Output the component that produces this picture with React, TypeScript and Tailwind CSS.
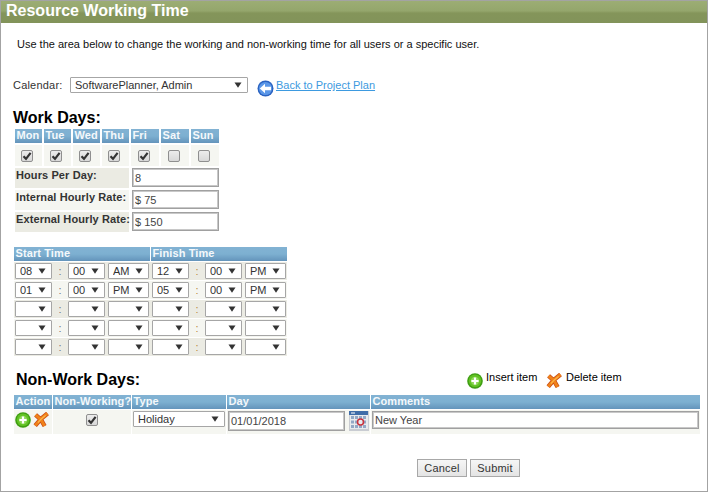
import React from 'react';

const days = [
  { label: 'Mon', width: 'w-[27px]', checked: true },
  { label: 'Tue', width: 'w-[27px]', checked: true },
  { label: 'Wed', width: 'w-[27px]', checked: true },
  { label: 'Thu', width: 'w-[27px]', checked: true },
  { label: 'Fri', width: 'w-[28px]', checked: true },
  { label: 'Sat', width: 'w-[28px]', checked: false },
  { label: 'Sun', width: 'w-[28px]', checked: false },
];

const rates = [
  { label: 'Hours Per Day:', value: '8', tint: 'bg-[#ebebe3]' },
  { label: 'Internal Hourly Rate:', value: '$ 75', tint: 'bg-[#f5f6f1]' },
  { label: 'External Hourly Rate:', value: '$ 150', tint: 'bg-[#ebebe3]' },
];

const timeRows = [
  ['08', '00', 'AM', '12', '00', 'PM'],
  ['01', '00', 'PM', '05', '00', 'PM'],
  ['', '', '', '', '', ''],
  ['', '', '', '', '', ''],
  ['', '', '', '', '', ''],
];

const headerCell =
  'h-[14px] bg-gradient-to-b from-[#82b2d3] via-[#7db0d1] to-[#6494bb] text-[11px] font-bold leading-[13px] tracking-[0.1px] text-[#f4f8fb] pl-[1.5px] whitespace-nowrap overflow-hidden';

const Arrow = ({ className }: { className: string }) => (
  <svg width="8" height="6" viewBox="0 0 8 6" className={`pointer-events-none absolute ${className}`}>
    <path d="M0.5 0.5h7L4 5.8z" fill="#333" />
  </svg>
);

const Select = ({ value, width, height = 'h-[16px]' }: { value: string; width: string; height?: string }) => (
  <div className={`relative shrink-0 ${width} ${height}`}>
    <select
      defaultValue={value}
      className="block h-full w-full appearance-none rounded-[1px] border border-[#a6a6a6] bg-white pl-[4px] text-[11px] leading-[14px] text-[#333]"
    >
      <option value={value}>{value}</option>
    </select>
    <Arrow className="right-[6px] top-[5px]" />
  </div>
);

const Check = ({ checked }: { checked: boolean }) => (
  <span className="flex h-[12px] w-[12px] items-center justify-center rounded-[2px] border border-[#8f8f8f] bg-gradient-to-b from-[#ececec] to-[#d8d8d8]">
    {checked && (
      <svg width="10" height="10" viewBox="0 0 10 10">
        <path d="M1.5 5.2 4 7.8 8.6 1.8" fill="none" stroke="#333" strokeWidth="2.2" />
      </svg>
    )}
  </span>
);

const TextBox = ({ value, className }: { value: string; className: string }) => (
  <input
    readOnly
    value={value}
    className={`border border-[#a0a0a0] bg-white pl-[2px] text-[11px] leading-[14px] text-[#444] shadow-[inset_0_0_0_1px_#c8c8c8] ${className}`}
  />
);

const PlusIcon = () => (
  <svg width="16" height="16" viewBox="0 0 16 16" className="shrink-0">
    <circle cx="8" cy="8" r="7.8" fill="#3f9e12" />
    <circle cx="8" cy="7.8" r="6.3" fill="#62c224" />
    <circle cx="8" cy="8" r="4.2" fill="#8fd85a" />
    <path d="M8 4.4v7.2M4.4 8h7.2" stroke="#fff" strokeWidth="2.2" />
  </svg>
);

const DeleteIcon = () => (
  <svg width="16" height="16" viewBox="0 0 16 16" className="shrink-0">
    <path d="M14.5 1.5 8 6.8 2.2 13.6M2.6 2.8 8 7.6 11.6 14" fill="none" stroke="#c64a18" strokeWidth="4.4" />
    <path d="M14.5 1.5 8 6.8 2.2 13.6M2.6 2.8 8 7.6 11.6 14" fill="none" stroke="#f0821a" strokeWidth="3" />
    <path d="M12.6 3.4 8 7.2 5 10.6" fill="none" stroke="#fbb84a" strokeWidth="1.2" />
  </svg>
);

const BackIcon = () => (
  <svg width="17" height="17" viewBox="0 0 17 17" className="mt-[3px] shrink-0">
    <circle cx="8.5" cy="8.5" r="8" fill="#2a62c0" />
    <circle cx="8.5" cy="8.5" r="6.6" fill="#5b97e8" />
    <path d="M2.8 8.5 8 3.8v3h6v3.4H8v3z" fill="#fff" />
  </svg>
);

const CalendarIcon = () => (
  <svg width="20" height="20" viewBox="0 0 20 20" className="shrink-0">
    <rect x="0" y="0" width="20" height="20" fill="#c9ccd2" />
    <rect x="0" y="0" width="19" height="4" fill="#3f6ca8" />
    <path d="M2 2h4" stroke="#fff" strokeWidth="1" />
    <rect x="1" y="4" width="18" height="14" fill="#e8eaee" />
    <path
      d="M2 6.5h3M6 6.5h3M10 6.5h3M14 6.5h3M2 11h3M6 11h3M14 11h3M2 15.5h3M6 15.5h3M10 15.5h3M14 15.5h3"
      stroke="#93a8c6"
      strokeWidth="3"
    />
    <circle cx="11.5" cy="11" r="3" fill="#e8eaee" stroke="#c9343f" strokeWidth="1.6" />
  </svg>
);

export default function App() {
  return (
    <div className="flex h-[492px] w-[708px] flex-col border border-[#a3a3a3] bg-white font-['Liberation_Sans',Arial,sans-serif] text-[11px] text-black">
      {/* Title bar */}
      <div className="h-[22px] shrink-0 bg-[linear-gradient(to_bottom,#9cad74_0,#94a66c_45%,#84955a_55%,#82935a_100%)] pl-[5px] text-[16px] font-bold leading-[20px] text-white">
        Resource Working Time
      </div>

      <p className="ml-[16px] mt-[14px] h-[14px] text-[11px] leading-[14px] text-[#111]">
        Use the area below to change the working and non-working time for all users or a specific user.
      </p>

      {/* Calendar picker */}
      <div className="ml-[12px] mt-[26px] flex h-[19px] items-start">
        <span className="w-[57px] pt-[1px] leading-[14px] tracking-[0.2px] text-[#333]">Calendar:</span>
        <Select value="SoftwarePlanner, Admin" width="w-[178px]" />
        <span className="ml-[9px]"><BackIcon /></span>
        <a href="#" className="ml-[2px] pt-[1px] leading-[14px] text-[#3d9ae0] underline">
          Back to Project Plan
        </a>
      </div>

      {/* Work days */}
      <h2 className="ml-[12px] mt-[12px] h-[20px] text-[16px] font-bold leading-[20px]">Work Days:</h2>
      <div className="ml-[14px] mt-[1px] flex gap-[2px]">
        {days.map((d) => (
          <div key={d.label} className={`${d.width} ${headerCell}`}>
            {d.label}
          </div>
        ))}
      </div>
      <div className="ml-[14px] mt-[2px] flex gap-[2px]">
        {days.map((d) => (
          <div key={d.label} className={`${d.width} flex h-[21px] items-center justify-center bg-[#f5f6f1] pr-[3px]`}>
            <Check checked={d.checked} />
          </div>
        ))}
      </div>
      <div className="ml-[14px] mt-[2px] flex flex-col gap-[2px]">
        {rates.map((r) => (
          <div key={r.label} className="flex h-[20px] items-start">
            <div className={`h-full w-[114px] ${r.tint} pl-[1px] text-[11px] font-bold leading-[14px] tracking-[0.1px] text-[#333] whitespace-nowrap`}>
              {r.label}
            </div>
            <TextBox value={r.value} className="ml-[3px] h-[19px] w-[87px]" />
          </div>
        ))}
      </div>

      {/* Start / finish times */}
      <div className="ml-[13px] mt-[15px] w-[273px]">
        <div className="flex gap-[1px]">
          <div className={`w-[136px] ${headerCell}`}>Start Time</div>
          <div className={`w-[136px] ${headerCell}`}>Finish Time</div>
        </div>
        <div className="mt-[1px] flex flex-col gap-[1px]">
          {timeRows.map((row, i) => (
            <div key={i} className={`flex h-[18px] items-center ${i % 2 === 0 ? 'bg-[#ebebe3]' : 'bg-[#f5f6f1]'}`}>
              <div className="flex w-[137px] items-center pl-[1px]">
                <Select value={row[0]} width="w-[37px]" />
                <span className="w-[16px] text-center leading-[14px] text-[#777]">:</span>
                <Select value={row[1]} width="w-[37px]" />
                <span className="w-[3px]" />
                <Select value={row[2]} width="w-[41px]" />
              </div>
              <div className="flex w-[136px] items-center pl-[1px]">
                <Select value={row[3]} width="w-[37px]" />
                <span className="w-[16px] text-center leading-[14px] text-[#b98a3e]">:</span>
                <Select value={row[4]} width="w-[37px]" />
                <span className="w-[3px]" />
                <Select value={row[5]} width="w-[41px]" />
              </div>
            </div>
          ))}
        </div>
      </div>

      {/* Non-work days heading and legend */}
      <div className="mt-[14px] flex h-[25px] items-start">
        <h2 className="ml-[15px] w-[451px] text-[16px] font-bold leading-[19px]">Non-Work Days:</h2>
        <span className="mt-[3px]"><PlusIcon /></span>
        <span className="ml-[3px] w-[60px] leading-[14px]">Insert item</span>
        <span className="mt-[3px]"><DeleteIcon /></span>
        <span className="ml-[4px] leading-[14px]">Delete item</span>
      </div>

      <div className="ml-[13px] w-[686px]">
        <div className="flex gap-[1px]">
          <div className={`w-[38px] ${headerCell}`}>Action</div>
          <div className={`w-[78px] ${headerCell}`}>Non-Working?</div>
          <div className={`w-[94px] ${headerCell}`}>Type</div>
          <div className={`w-[143px] ${headerCell}`}>Day</div>
          <div className={`w-[329px] ${headerCell}`}>Comments</div>
        </div>
        <div className="mt-[1px] flex h-[24px] gap-[1px]">
          <div className="flex w-[38px] items-start gap-[2px] bg-[#f5f6f1] pl-[1px] pt-[2px]">
            <PlusIcon />
            <DeleteIcon />
          </div>
          <div className="flex w-[78px] items-start justify-center bg-[#f5f6f1] pt-[4px]">
            <Check checked />
          </div>
          <div className="w-[94px] bg-[#f5f6f1] pl-[1px] pt-[1px]">
            <Select value="Holiday" width="w-[92px]" />
          </div>
          <div className="flex w-[143px] items-start bg-[#f5f6f1] pl-[1px] pt-[1px]">
            <TextBox value="01/01/2018" className="h-[20px] w-[117px]" />
            <span className="ml-[4px]"><CalendarIcon /></span>
          </div>
          <div className="w-[329px] bg-[#f5f6f1] pl-[1px] pt-[1px]">
            <TextBox value="New Year" className="h-[18px] w-[327px]" />
          </div>
        </div>
      </div>

      {/* Form buttons */}
      <div className="ml-[416px] mt-[25px] flex gap-[3px]">
        <button className="h-[18px] w-[50px] border border-[#a8a8a8] bg-gradient-to-b from-[#f6f6f6] to-[#e4e4e4] text-[11px] leading-[14px] tracking-[0.2px] text-[#333]">
          Cancel
        </button>
        <button className="h-[18px] w-[50px] border border-[#a8a8a8] bg-gradient-to-b from-[#f6f6f6] to-[#e4e4e4] text-[11px] leading-[14px] tracking-[0.2px] text-[#333]">
          Submit
        </button>
      </div>
    </div>
  );
}
